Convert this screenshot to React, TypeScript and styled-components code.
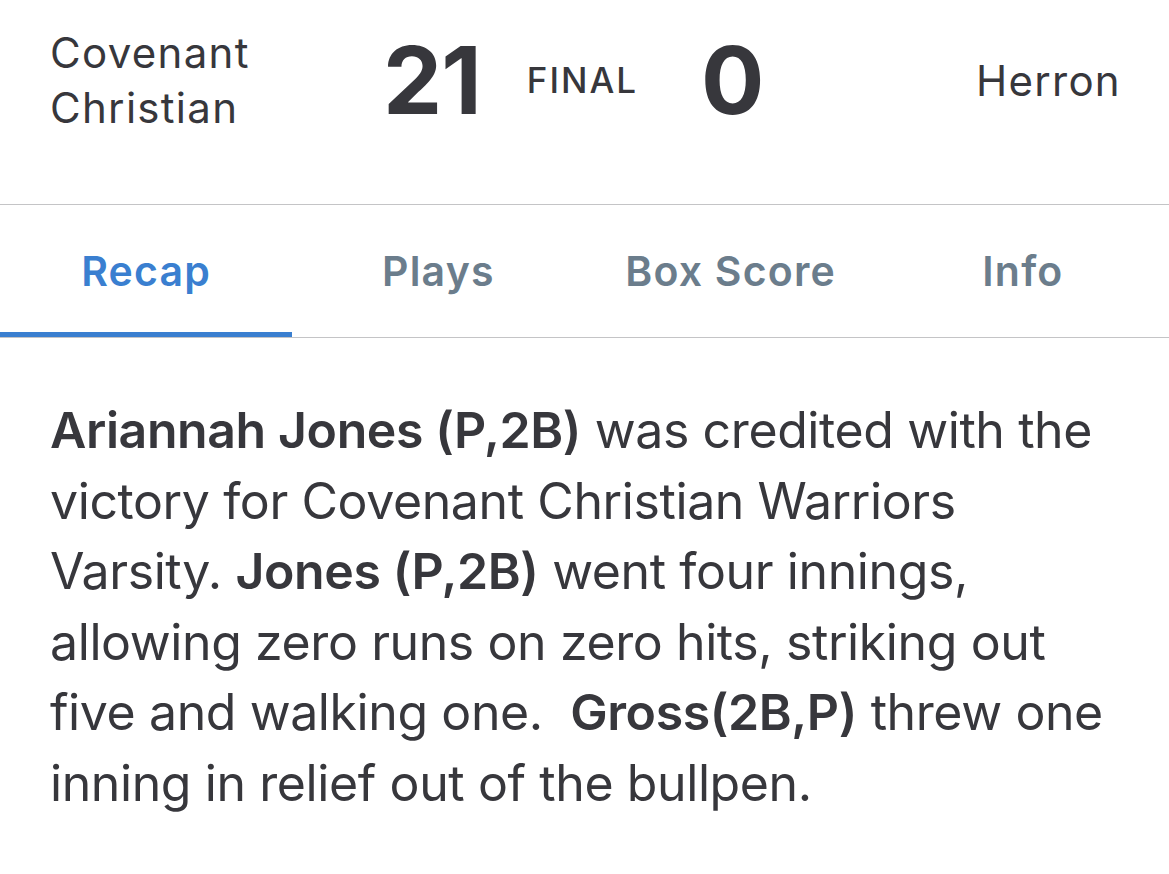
import styled, { createGlobalStyle } from 'styled-components'

const GlobalStyle = createGlobalStyle`
  html, body {
    margin: 0;
    padding: 0;
    background: #fff;
  }
  body {
    font-family: Inter, "Noto Sans", sans-serif;
    color: #37373c;
    -webkit-font-smoothing: antialiased;
  }
`

const Page = styled.div`
  width: 1169px;
  min-height: 874px;
  background: #fff;
`

const Scoreboard = styled.header`
  height: 205px;
  box-sizing: border-box;
  display: flex;
  align-items: center;
  padding: 0 48px 44px 50px;
  border-bottom: 1px solid #c4c4c6;
`

const TeamName = styled.div<{ $align?: 'left' | 'right' }>`
  font-size: 42px;
  line-height: 55px;
  font-weight: 400;
  letter-spacing: 1.3px;
  text-align: ${p => p.$align || 'left'};
  flex: ${p => (p.$align === 'right' ? '1' : '0 0 333px')};
`

const Score = styled.div`
  font-size: 94px;
  font-weight: 700;
  line-height: 1;
  letter-spacing: -1px;
`

const Status = styled.div`
  font-size: 35px;
  font-weight: 500;
  letter-spacing: 2px;
  margin: 0 63px 0 46px;
`

const Tabs = styled.nav`
  display: grid;
  grid-template-columns: repeat(4, 1fr);
  height: 132px;
  border-bottom: 1px solid #c4c4c6;
`

const Tab = styled.div<{ $active?: boolean }>`
  display: flex;
  align-items: center;
  justify-content: center;
  font-size: 41px;
  font-weight: 600;
  letter-spacing: 1.2px;
  color: ${p => (p.$active ? '#3a7fd0' : '#6b7d8c')};
  box-shadow: ${p => (p.$active ? 'inset 0 -5px 0 #3a7fd0' : 'none')};
`

const Recap = styled.p`
  margin: 0;
  padding: 57px 44px 0 50px;
  font-size: 50px;
  line-height: 70.5px;
  font-weight: 400;
  letter-spacing: -0.4px;
`

const Player = styled.b`
  font-weight: 600;
`

export default function App() {
  return (
    <Page>
      <GlobalStyle />
      <Scoreboard>
        <TeamName>Covenant<br />Christian</TeamName>
        <Score>21</Score>
        <Status>FINAL</Status>
        <Score>0</Score>
        <TeamName $align="right">Herron</TeamName>
      </Scoreboard>
      <Tabs>
        <Tab $active>Recap</Tab>
        <Tab>Plays</Tab>
        <Tab>Box Score</Tab>
        <Tab>Info</Tab>
      </Tabs>
      <Recap>
        <Player>Ariannah Jones (P,2B)</Player> was credited with the victory for Covenant
        Christian Warriors Varsity. <Player>Jones (P,2B)</Player> went four innings, allowing
        zero runs on zero hits, striking out five and walking one.&nbsp;{' '}
        <Player>Gross(2B,P)</Player> threw one inning in relief out of the bullpen.
      </Recap>
    </Page>
  )
}
